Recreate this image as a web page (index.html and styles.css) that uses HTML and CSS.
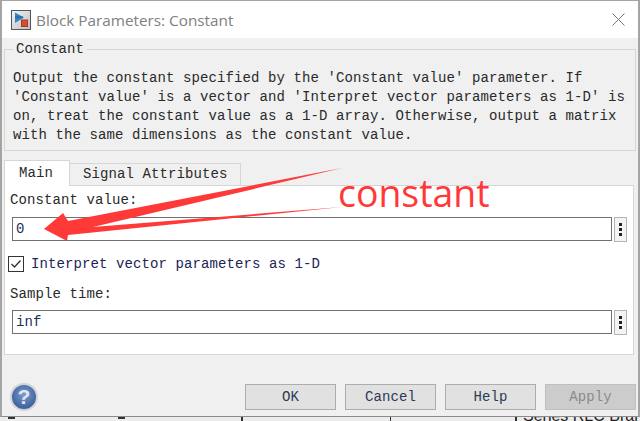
FILE: index.html
```html
<!DOCTYPE html>
<html>
	<head>
		<meta charset="utf-8">
		<title>Block Parameters: Constant</title>
		<link rel="stylesheet" href="styles.css">
	</head>
	<body>
		<div class="window">
			<div class="titlebar">
				<svg class="block-icon" width="20" height="20" viewBox="0 0 20 20">
					<defs>
						<linearGradient id="frame" x1="0" y1="0" x2="1" y2="1">
							<stop offset="0" stop-color="#f4f4f4"/>
							<stop offset="1" stop-color="#bdbdbd"/>
						</linearGradient>
					</defs>
					<rect x="0.5" y="0.5" width="19" height="19" fill="url(#frame)" stroke="#555"/>
					<path d="M4 2.5 L4 13 L13 7.5 Z" fill="#2f86c6"/>
					<path d="M4 7 L12 7" stroke="#1d5f95" stroke-width="1"/>
					<rect x="10.5" y="10" width="6" height="6.5" fill="#d2502a" stroke="#a33"/>
				</svg>
				<span class="title">Block Parameters: Constant</span>
				<svg class="close" width="13" height="13" viewBox="0 0 13 13">
					<path d="M0.5 0.5 L12.5 12.5 M12.5 0.5 L0.5 12.5" stroke="#777" stroke-width="1" fill="none"/>
				</svg>
			</div>
			<div class="content">
				<fieldset class="group">
					<legend>Constant</legend>
					<p>Output the constant specified by the 'Constant value' parameter. If<br>'Constant value' is a vector and 'Interpret vector parameters as 1-D' is<br>on, treat the constant value as a 1-D array. Otherwise, output a matrix<br>with the same dimensions as the constant value.</p>
				</fieldset>
				<div class="tabs">
					<div class="tab current">Main</div>
					<div class="tab">Signal Attributes</div>
				</div>
				<div class="panel">
					<div class="label first">Constant value:</div>
					<div class="field-row">
						<div class="field">0</div>
						<div class="more"><i></i><i></i><i></i></div>
					</div>
					<div class="check-row">
						<svg class="check" width="16" height="16" viewBox="0 0 16 16">
							<rect x="0.5" y="0.5" width="15" height="15" fill="#fff" stroke="#333"/>
							<path d="M3.5 8 L6.5 11 L12.5 4.5" fill="none" stroke="#333" stroke-width="1.4"/>
						</svg>
						<span>Interpret vector parameters as 1-D</span>
					</div>
					<div class="label">Sample time:</div>
					<div class="field-row">
						<div class="field">inf</div>
						<div class="more"><i></i><i></i><i></i></div>
					</div>
				</div>
				<div class="footer">
					<div class="help-icon">?</div>
					<div class="buttons">
						<div class="btn">OK</div>
						<div class="btn">Cancel</div>
						<div class="btn">Help</div>
						<div class="btn disabled">Apply</div>
					</div>
				</div>
			</div>
		</div>
		<div class="behind">
			<span class="frag f1"></span>
			<span class="frag f2"></span>
			<span class="frag f3"></span>
			<span class="frag f4"></span>
			<span class="frag f5"></span>
			<span class="behind-text">Series RLC Bran</span>
		</div>
		<svg class="arrow" width="640" height="421" viewBox="0 0 640 421">
			<path d="M44 229 L63 213 L68 221 L342 168 L93 227 L342 207 L68 235 L67 241 Z" fill="#ff3838"/>
		</svg>
		<div class="note">constant</div>
	</body>
</html>
```

FILE: styles.css
```css
* {
	box-sizing: border-box;
	padding: 0;
	margin: 0;
}
html, body {
	width: 640px;
	height: 421px;
	overflow: hidden;
	background: #ececec;
}
body {
	position: relative;
	font-family: "Liberation Mono", monospace;
	font-size: 14px;
	letter-spacing: 0.1px;
	color: #2a2a2a;
}
.window {
	width: 640px;
	height: 417px;
	border: 1px solid #a4a4a4;
	border-left-width: 2px;
	border-right-width: 2px;
	border-bottom-color: #8c8c8c;
	background: #f0f0f0;
}
.titlebar {
	display: flex;
	align-items: center;
	height: 37px;
	padding: 0 13px 0 9px;
	background: #fff;
}
.block-icon {
	flex: none;
}
.title {
	flex: 1;
	margin-left: 5px;
	font-family: "Open Sans", sans-serif;
	font-size: 15.3px;
	letter-spacing: 0;
	color: #808080;
}
.content {
	padding: 3px 0 0 2px;
}
.group {
	width: 632px;
	height: 110px;
	border: 1px solid #d6d6d6;
	padding: 0 8px;
}
.group legend {
	padding: 0 3px;
	line-height: 17px;
}
.group p {
	margin-top: 11px;
	line-height: 19px;
	white-space: nowrap;
}
.tabs {
	display: flex;
	align-items: flex-end;
	height: 25px;
	margin-top: 9px;
}
.tab {
	height: 22px;
	padding: 0 12px 0 13px;
	border: 1px solid #d6d6d6;
	border-bottom: 0;
	border-left: 0;
	line-height: 21px;
	background: #f0f0f0;
}
.tab.current {
	width: 66px;
	height: 26px;
	margin-bottom: -1px;
	position: relative;
	padding: 0 0 0 14px;
	border-left: 1px solid #d6d6d6;
	line-height: 25px;
	background: #fff;
}
.panel {
	width: 630px;
	height: 170px;
	padding: 0 6px 0 7px;
	border: 1px solid #d6d6d6;
	background: #fff;
}
.label {
	margin: 14px 0 0 -2px;
	line-height: 16px;
}
.label.first {
	margin-top: 6px;
	line-height: 17px;
}
.field-row {
	display: flex;
	gap: 2px;
	margin-top: 8px;
}
.field {
	flex: none;
	width: 600px;
	height: 24px;
	padding-left: 3px;
	border: 1px solid #707070;
	line-height: 22px;
	color: #1d2f5c;
}
.more {
	display: flex;
	flex: none;
	flex-direction: column;
	align-items: center;
	justify-content: center;
	gap: 2px;
	width: 13px;
	height: 25px;
	border: 1px solid #b4b4b4;
	background: #f4f4f4;
}
.more i {
	width: 3px;
	height: 3px;
	background: #222;
}
.check-row {
	display: flex;
	align-items: center;
	height: 16px;
	margin: 14px 0 0 -4px;
}
.check-row span {
	margin-left: 7px;
	color: #1d2456;
}
.footer {
	display: flex;
	align-items: center;
	justify-content: space-between;
	height: 28px;
	margin-top: 28px;
	padding: 0 2px 0 6px;
}
.help-icon {
	width: 28px;
	height: 28px;
	border: 2px solid #cfd3dc;
	border-radius: 50%;
	font-family: "Liberation Sans", sans-serif;
	font-size: 21px;
	font-weight: 700;
	letter-spacing: 0;
	line-height: 24px;
	text-align: center;
	color: #dfe6f3;
	background: radial-gradient(circle at 50% 40%, #7d9ccd, #3a5d97 78%);
}
.buttons {
	display: flex;
	gap: 9px;
}
.btn {
	width: 91px;
	height: 26px;
	border: 1px solid #adadad;
	line-height: 24px;
	text-align: center;
	color: #2c3a55;
	background: #e1e1e1;
}
.btn.disabled {
	border-color: #bfbfbf;
	color: #8a8a8a;
	background: #cccccc;
}
.behind {
	position: relative;
	height: 4px;
	overflow: hidden;
}
.frag {
	position: absolute;
	top: 0;
	height: 4px;
	background: #333;
}
.f1 {
	left: 8px;
	width: 7px;
	height: 2px;
}
.f2 {
	left: 118px;
	width: 7px;
	height: 2px;
}
.f3 {
	left: 241px;
	width: 2px;
}
.f4 {
	left: 515px;
	width: 2px;
}
.f5 {
	left: 390px;
	width: 1px;
}
.behind-text {
	position: absolute;
	top: -10px;
	left: 523px;
	font-family: "Liberation Sans", sans-serif;
	font-size: 16px;
	letter-spacing: 0;
	white-space: nowrap;
	color: #222;
}
.arrow {
	position: absolute;
	top: 0;
	left: 0;
}
.note {
	position: absolute;
	top: 168px;
	left: 338px;
	font-family: "Open Sans", sans-serif;
	font-size: 37.4px;
	letter-spacing: 0;
	line-height: 50px;
	color: #ff3838;
}
```
